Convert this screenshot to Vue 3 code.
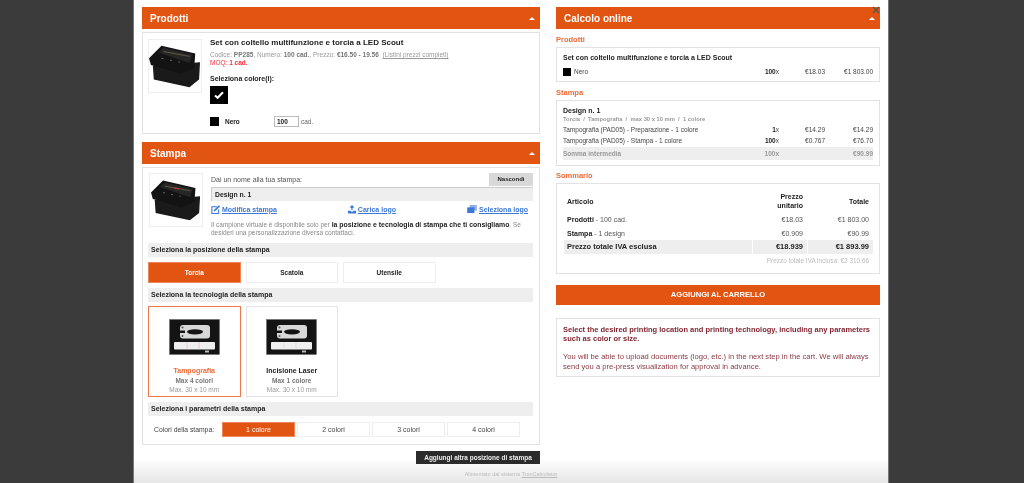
<script setup>
const positions = [
  { label: 'Torcia', active: true },
  { label: 'Scatola', active: false },
  { label: 'Utensile', active: false },
]
const techniques = [
  { name: 'Tampografia', colors: 'Max 4 colori', size: 'Max. 30 x 10 mm', active: true },
  { name: 'Incisione Laser', colors: 'Max 1 colore', size: 'Max. 30 x 10 mm', active: false },
]
const colorCounts = [
  { label: '1 colore', active: true },
  { label: '2 colori', active: false },
  { label: '3 colori', active: false },
  { label: '4 colori', active: false },
]
const printRows = [
  { name: 'Tampografia (PAD05) - Preparazione - 1 colore', qty: '1', unit: '€14.29', total: '€14.29' },
  { name: 'Tampografia (PAD05) - Stampa - 1 colore', qty: '100', unit: '€0.767', total: '€76.70' },
]
</script>

<template>
  <div class="page">
    <div class="modal">
      <div class="col-left">
        <div class="head"><span>Prodotti</span><i class="caret"></i></div>
        <div class="panel product">
          <div class="thumb">
            <svg width="52" height="52" viewBox="0 0 54 54">
              <path d="M4 27 L53 23 L52 41 L42 49 L5 41 Z" fill="#1a1a1a" />
              <path d="M0 19 L13 6 L48 14 L47 29 L33 35 L2 26 Z" fill="#131313" />
              <path d="M10 13 L15 8 L45 15 L42 24 Z" fill="#262626" />
              <path d="M15 12 L42 17" stroke="#6f6a50" stroke-width="0.800" />
              <path d="M13 19 L32 23" stroke="#777" stroke-width="1" stroke-dasharray="2 7" />
            </svg>
          </div>
          <div class="product-info">
            <div class="product-name">Set con coltello multifunzione e torcia a LED Scout</div>
            <div class="meta">Codice: <b>PP285</b>, Numero: <b>100 cad.</b>, Prezzo: <b>€16.50 - 19.56</b> &nbsp;<u>(Listini prezzi completi)</u></div>
            <div class="moq">MOQ: <b>1 cad.</b></div>
            <div class="pick-label">Seleziona colore(i):</div>
            <div class="swatch-big">
              <svg width="10" height="8" viewBox="0 0 12 10"><path d="M1 5.500 L4.300 8.500 L11 1.500" fill="none" stroke="#fff" stroke-width="2.600" /></svg>
            </div>
            <div class="qty-row">
              <span class="swatch-small"></span>
              <b class="qty-name">Nero</b>
              <span class="qty-input">100</span>
              <span class="qty-unit">cad.</span>
            </div>
          </div>
        </div>

        <div class="head second"><span>Stampa</span><i class="caret"></i></div>
        <div class="panel print">
          <div class="design">
            <div class="thumb">
              <svg width="50" height="50" viewBox="0 0 54 54">
                <path d="M4 27 L53 23 L52 41 L42 49 L5 41 Z" fill="#1a1a1a" />
                <path d="M0 19 L13 6 L48 14 L47 29 L33 35 L2 26 Z" fill="#131313" />
                <path d="M10 13 L15 8 L45 15 L42 24 Z" fill="#262626" />
                <path d="M15 12 L42 17" stroke="#6f6a50" stroke-width="0.800" />
                <path d="M25 14 L30 15" stroke="#c33" stroke-width="1.200" />
                <path d="M13 19 L32 23" stroke="#777" stroke-width="1" stroke-dasharray="2 7" />
              </svg>
            </div>
            <div class="design-main">
              <div class="name-row">
                <span>Dai un nome alla tua stampa:</span>
                <span class="hide-btn">Nascondi</span>
              </div>
              <div class="name-input">Design n. 1</div>
              <div class="links">
                <a>
                  <svg width="9" height="9" viewBox="0 0 10 10"><path d="M6.500 2 H1 V9.500 H8.500 V5" fill="none" stroke="#3c78d8" stroke-width="1.200" /><path d="M3.500 6.500 L9.500 0.800" stroke="#3c78d8" stroke-width="1.800" /></svg>
                  <span>Modifica stampa</span>
                </a>
                <a>
                  <svg width="8" height="9" viewBox="0 0 10 10"><path d="M0 6.500 H3 L5 8 L7 6.500 H10 V10 H0 Z" fill="#3c78d8" /><path d="M5 0 V6 M3 2.500 L5 0.500 L7 2.500" fill="none" stroke="#3c78d8" stroke-width="1.400" /></svg>
                  <span>Carica logo</span>
                </a>
                <a>
                  <svg width="10" height="8" viewBox="0 0 12 10"><path d="M3 0 H12 V7 H3 Z" fill="#8fb0e6" /><path d="M0 3 H9 V10 H0 Z" fill="#3c78d8" /></svg>
                  <span>Seleziona logo</span>
                </a>
              </div>
              <p class="note">Il campione virtuale è disponibile solo per <b>la posizione e tecnologia di stampa che ti consigliamo</b>. Se<br />desideri una personalizzazione diversa contattaci.</p>
            </div>
          </div>

          <div class="section-bar">Seleziona la posizione della stampa</div>
          <div class="positions">
            <div v-for="p in positions" :key="p.label" class="pos" :class="{ on: p.active }">{{ p.label }}</div>
          </div>

          <div class="section-bar">Seleziona la tecnologia della stampa</div>
          <div class="techs">
            <div v-for="t in techniques" :key="t.name" class="tech" :class="{ on: t.active }">
              <svg class="tech-img" width="51" height="36" viewBox="0 0 51 36">
                <rect x="0.500" y="0.500" width="50" height="35" fill="#141414" stroke="#666" stroke-width="0.500" />
                <rect x="11" y="6" width="30" height="13.500" rx="3" fill="#d8d8d8" />
                <path d="M11 11.500 H16 V14 H11 Z" fill="#141414" />
                <circle cx="13.500" cy="8.500" r="1" fill="#555" />
                <circle cx="13.500" cy="17" r="1" fill="#555" />
                <ellipse cx="26" cy="12.800" rx="8" ry="2.600" fill="#141414" />
                <rect x="5" y="23" width="41" height="7.500" rx="1" fill="#eee" />
                <path d="M18 23 V30.500 M30 23 V30.500" :stroke="t.active ? '#e8a0a0' : '#ccc'" stroke-width="0.500" />
                <rect x="36" y="31.500" width="4" height="2" fill="#bbb" />
              </svg>
              <div class="tech-name">{{ t.name }}</div>
              <div class="tech-colors">{{ t.colors }}</div>
              <div class="tech-size">{{ t.size }}</div>
            </div>
          </div>

          <div class="section-bar">Seleziona i parametri della stampa</div>
          <div class="params">
            <span class="params-label">Colori della stampa:</span>
            <div v-for="c in colorCounts" :key="c.label" class="count" :class="{ on: c.active }">{{ c.label }}</div>
          </div>
        </div>

        <div class="add-row"><span class="add-btn">Aggiungi altra posizione di stampa</span></div>
      </div>

      <div class="col-right">
        <div class="head"><span>Calcolo online</span><i class="caret"></i></div>

        <div class="sub-title">Prodotti</div>
        <div class="panel box-products">
          <div class="box-name">Set con coltello multifunzione e torcia a LED Scout</div>
          <div class="line line-nero">
            <span class="line-name"><i class="swatch-tiny"></i>Nero</span>
            <span class="line-qty"><b>100</b>x</span>
            <span class="line-unit">€18.03</span>
            <span class="line-total">€1 803.00</span>
          </div>
        </div>

        <div class="sub-title">Stampa</div>
        <div class="panel box-print">
          <div class="design-name">Design n. 1</div>
          <div class="design-path">Torcia &nbsp;/&nbsp; Tampografia &nbsp;/&nbsp; max 30 x 10 mm &nbsp;/&nbsp; 1 colore</div>
          <div v-for="r in printRows" :key="r.name" class="line">
            <span class="line-name">{{ r.name }}</span>
            <span class="line-qty"><b>{{ r.qty }}</b>x</span>
            <span class="line-unit">{{ r.unit }}</span>
            <span class="line-total">{{ r.total }}</span>
          </div>
          <div class="line subtotal">
            <span class="line-name">Somma intermedia</span>
            <span class="line-qty">100x</span>
            <span class="line-unit"></span>
            <span class="line-total">€90.99</span>
          </div>
        </div>

        <div class="sub-title sum-title">Sommario</div>
        <div class="panel box-summary">
          <div class="sum-row sum-head">
            <span class="first">Articolo</span>
            <span class="num">Prezzo<br />unitario</span>
            <span class="num">Totale</span>
          </div>
          <div class="sum-row">
            <span class="first"><b>Prodotti</b> - 100 cad.</span>
            <span class="num">€18.03</span>
            <span class="num">€1 803.00</span>
          </div>
          <div class="sum-row">
            <span class="first"><b>Stampa</b> - 1 design</span>
            <span class="num">€0.909</span>
            <span class="num">€90.99</span>
          </div>
          <div class="sum-row sum-total">
            <span class="first">Prezzo totale IVA esclusa</span>
            <span class="num">€18.939</span>
            <span class="num">€1 893.99</span>
          </div>
          <div class="sum-vat">Prezzo totale IVA inclusa: €2 310.66</div>
        </div>

        <div class="cart-btn">AGGIUNGI AL CARRELLO</div>

        <div class="panel hint">
          <b>Select the desired printing location and printing technology, including any parameters such as color or size.</b>
          <p>You will be able to upload documents (logo, etc.) in the next step in the cart. We will always send you a pre-press visualization for approval in advance.</p>
        </div>
      </div>

      <svg class="close" width="8" height="8" viewBox="0 0 8 8"><path d="M1 1 L7 7 M7 1 L1 7" stroke="#555" stroke-width="1.200" /></svg>
      <div class="powered">Alimentato dal sistema <u>TronCalculator</u></div>
    </div>
  </div>
</template>

<style>
html, body {
  margin: 0;
  overflow: hidden;
  background: #3b3b3b;
}
</style>

<style scoped>
.page {
  height: 483px;
  overflow: hidden;
  background: #3b3b3b;
  font-family: "Liberation Sans", Arial, sans-serif;
  color: #222;
  font-size: 7px;
}
.modal {
  position: relative;
  width: 754px;
  height: 483px;
  margin-left: 134px;
  box-sizing: border-box;
  padding: 7px 8px 0;
  display: flex;
  gap: 16px;
  background: linear-gradient(#fff 0, #fff 458px, #e6e6e6 483px);
  box-shadow: 0 0 0 1px #777;
  /* the reference is a soft, upscaled capture */
  filter: blur(0.3px);
}
.col-left { width: 398px; }
.col-right { width: 324px; }

.head {
  height: 22px;
  background: #e25412;
  color: #fff;
  font-size: 10px;
  font-weight: bold;
  display: flex;
  align-items: center;
  justify-content: space-between;
  padding: 0 5px 0 8px;
  box-sizing: border-box;
}
.head.second { margin-top: 8px; }
.caret {
  width: 0;
  height: 0;
  border-left: 3px solid transparent;
  border-right: 3px solid transparent;
  border-bottom: 3px solid #fff;
}
.panel {
  border: 1px solid #e2e2e2;
  box-sizing: border-box;
  background: #fff;
}

.product {
  margin-top: 3px;
  height: 102px;
  padding: 6px 5px;
  display: flex;
  gap: 8px;
}
.thumb {
  width: 54px;
  height: 54px;
  flex: none;
  border: 1px solid #eee;
  box-sizing: border-box;
  display: flex;
  align-items: center;
  justify-content: center;
}
.product-name {
  font-size: 8px;
  font-weight: bold;
  line-height: 10px;
  margin-top: -1px;
}
.meta {
  color: #999;
  font-size: 6.500px;
  line-height: 8px;
  margin-top: 3px;
}
.meta b { color: #777; }
.moq {
  color: #f0303a;
  font-size: 6.500px;
  line-height: 8px;
}
.pick-label {
  font-size: 7px;
  font-weight: bold;
  line-height: 9px;
  margin-top: 7px;
}
.swatch-big {
  width: 18px;
  height: 18px;
  background: #000;
  margin-top: 3px;
  display: flex;
  align-items: center;
  justify-content: center;
}
.qty-row {
  display: flex;
  align-items: center;
  margin-top: 12px;
  font-size: 6.500px;
}
.swatch-small {
  width: 9px;
  height: 9px;
  background: #000;
}
.qty-name { margin-left: 6px; width: 49px; }
.qty-input {
  width: 25px;
  height: 11px;
  line-height: 9px;
  box-sizing: border-box;
  border: 1px solid #bbb;
  padding-left: 2px;
  font-weight: bold;
}
.qty-unit { margin-left: 2px; color: #666; }

.print {
  margin-top: 3px;
  height: 278px;
  padding: 5px 6px 0 5px;
}
.design { display: flex; gap: 8px; padding-left: 1px; }
.design-main { flex: 1; min-width: 0; }
.name-row {
  display: flex;
  justify-content: space-between;
  align-items: center;
  height: 13px;
  font-size: 7px;
  color: #555;
}
.hide-btn {
  width: 44px;
  height: 13px;
  line-height: 13px;
  background: #d8d8d8;
  color: #222;
  font-size: 6px;
  font-weight: bold;
  text-align: center;
}
.name-input {
  height: 14px;
  line-height: 13px;
  margin-top: 1px;
  background: #eee;
  border-left: 1px solid #ccc;
  border-top: 1px solid #ccc;
  box-sizing: border-box;
  padding-left: 3px;
  font-weight: bold;
  font-size: 6.800px;
}
.links {
  display: flex;
  justify-content: space-between;
  margin-top: 2px;
  padding-right: 5px;
  height: 12px;
  align-items: center;
}
.links a {
  display: flex;
  align-items: center;
  gap: 2px;
  color: #3c78d8;
  font-size: 7px;
  font-weight: bold;
  text-decoration: underline;
}
.note {
  margin: 5.500px 0 0;
  font-size: 6.500px;
  line-height: 8.500px;
  color: #888;
  white-space: nowrap;
}
.note b { color: #222; font-size: 6.900px; }

.section-bar {
  height: 14px;
  line-height: 14px;
  background: #eee;
  padding-left: 3px;
  font-size: 7px;
  font-weight: bold;
  margin-top: 5px;
}
.positions { display: flex; gap: 5px; margin-top: 5px; }
.pos {
  width: 92.500px;
  height: 21px;
  line-height: 19px;
  box-sizing: border-box;
  border: 1px solid #eee;
  text-align: center;
  font-size: 6.500px;
  font-weight: bold;
}
.pos.on {
  background: #e25412;
  border-color: #f0875a;
  color: #fff;
}
.techs { display: flex; gap: 5px; margin-top: 4px; }
.tech {
  width: 92.500px;
  height: 91px;
  box-sizing: border-box;
  border: 1px solid #e4e4e4;
  text-align: center;
  padding-top: 12px;
}
.tech.on { border-color: #ee784a; }
.tech-img { display: block; margin: 0 auto; }
.tech-name {
  font-size: 7px;
  font-weight: bold;
  line-height: 9px;
  margin-top: 11px;
}
.tech.on .tech-name { color: #ee6a35; }
.tech-colors {
  color: #777;
  font-weight: bold;
  font-size: 6.500px;
  line-height: 9px;
  margin-top: 1px;
}
.tech-size {
  color: #999;
  font-size: 6.500px;
  line-height: 9px;
}
.params {
  display: flex;
  align-items: center;
  gap: 2px;
  margin-top: 6px;
  padding-left: 6px;
}
.params-label {
  width: 66px;
  font-size: 6.800px;
  color: #444;
}
.count {
  width: 73px;
  height: 15px;
  line-height: 13px;
  box-sizing: border-box;
  border: 1px solid #eee;
  text-align: center;
  font-size: 7px;
  color: #444;
}
.count.on {
  background: #e25412;
  border-color: #f0875a;
  color: #fff;
}
.add-row {
  display: flex;
  justify-content: flex-end;
  margin-top: 6px;
}
.add-btn {
  width: 124px;
  height: 13px;
  line-height: 13px;
  background: #2b2b2b;
  color: #eee;
  text-align: center;
  font-size: 6.500px;
  font-weight: bold;
}

.sub-title {
  color: #ee6a35;
  font-size: 7.500px;
  font-weight: bold;
  line-height: 9px;
  margin-top: 6px;
}
.sum-title { margin-top: 5px; }
.box-products {
  margin-top: 3px;
  height: 35px;
  padding: 5px 6px 0;
}
.box-name {
  font-size: 7px;
  font-weight: bold;
  line-height: 9px;
}
.line {
  display: flex;
  align-items: center;
  height: 11px;
  font-size: 6.500px;
  color: #444;
}
.line-nero { margin-top: 4px; }
.line-name { flex: 1; display: flex; align-items: center; gap: 3px; white-space: nowrap; }
.line-qty { width: 40px; text-align: right; }
.line-qty b { color: #222; }
.line-unit { width: 46px; text-align: right; }
.line-total { width: 48px; text-align: right; }
.swatch-tiny {
  width: 8px;
  height: 8px;
  background: #000;
}
.box-print {
  margin-top: 3px;
  height: 66px;
  padding: 5px 6px 0;
}
.design-name {
  font-size: 7px;
  font-weight: bold;
  line-height: 9px;
}
.design-path {
  font-size: 5.800px;
  font-weight: bold;
  color: #999;
  line-height: 8px;
  margin-bottom: 1px;
}
.line.subtotal {
  height: 13px;
  margin-top: 1px;
  background: #eee;
  color: #999;
  font-weight: bold;
}
.box-summary {
  margin-top: 3px;
  height: 91px;
  padding: 8px 6px 0 7px;
}
.sum-row {
  display: grid;
  grid-template-columns: 188px 54px 65px;
  align-items: center;
  column-gap: 1px;
  height: 14px;
  font-size: 7px;
  color: #555;
}
.sum-row b { color: #222; }
.first { padding-left: 3px; }
.num { text-align: right; padding-right: 4px; }
.sum-head {
  height: 18px;
  line-height: 9px;
  color: #222;
  font-weight: bold;
  margin-bottom: 2px;
}
.sum-total {
  color: #222;
  font-weight: bold;
  font-size: 7.500px;
}
.sum-total span {
  background: #eee;
  height: 14px;
  line-height: 14px;
}
.sum-vat {
  text-align: right;
  color: #bbb;
  font-size: 6.400px;
  line-height: 8px;
  margin-top: 3px;
  padding-right: 4px;
}
.cart-btn {
  margin-top: 11px;
  height: 20px;
  line-height: 20px;
  background: #e25412;
  color: #fff;
  text-align: center;
  font-size: 7.600px;
  font-weight: bold;
}
.hint {
  margin-top: 13px;
  height: 59px;
  padding: 6px;
  font-size: 7.500px;
  line-height: 9.300px;
  color: #7d1f2b;
}
.hint p {
  margin: 8.700px 0 0;
  font-size: 7.600px;
  color: #8a3a45;
}

.close {
  position: absolute;
  top: 6px;
  left: 738px;
}
.powered {
  position: absolute;
  top: 471px;
  right: 0;
  left: 0;
  text-align: center;
  color: #bbb;
  font-size: 5.500px;
}
</style>
